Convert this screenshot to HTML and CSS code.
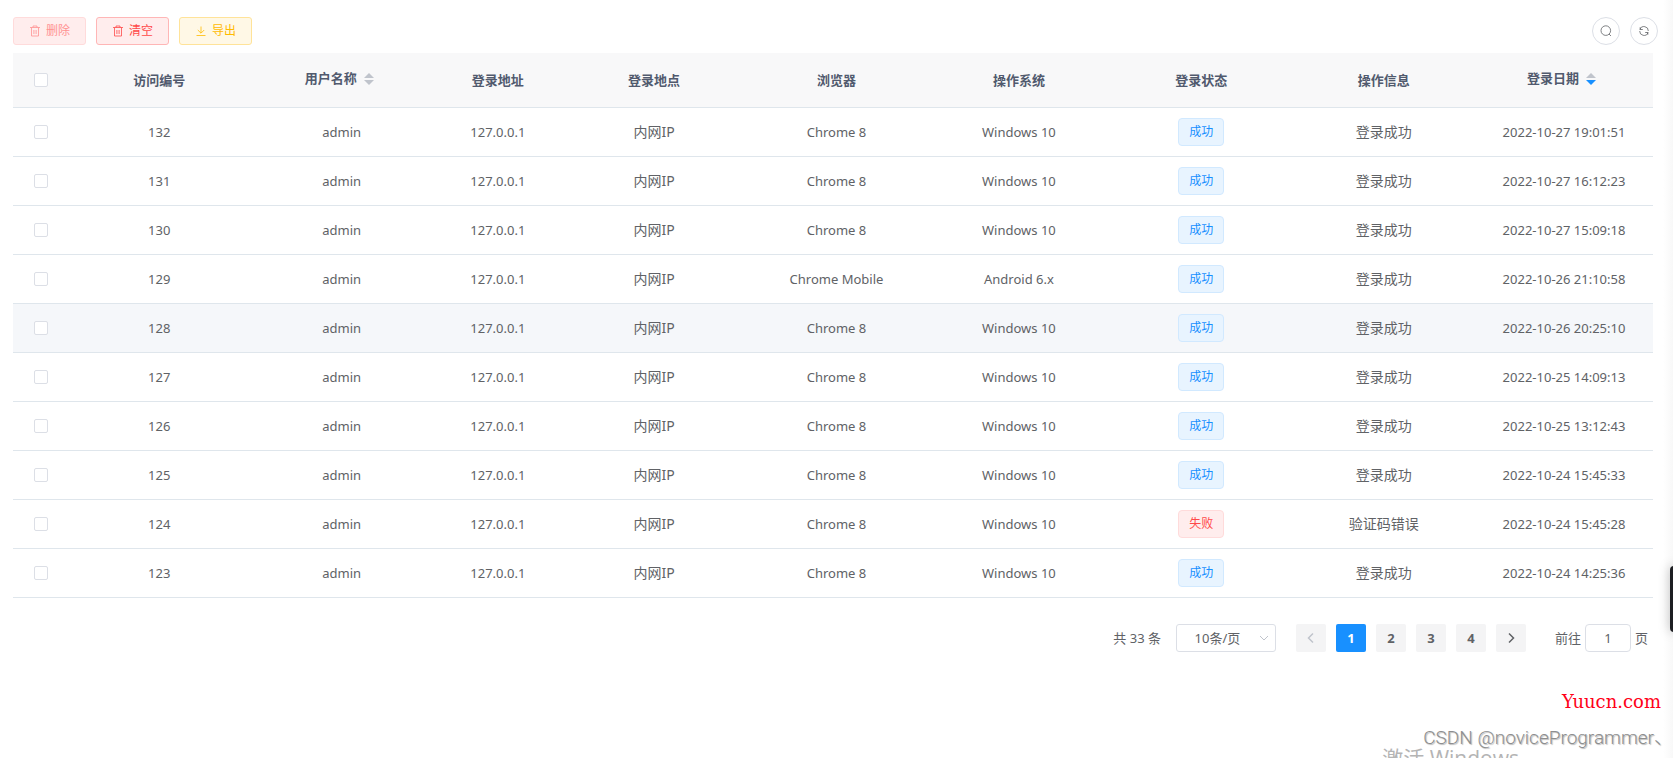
FILE: index.html
```
<!DOCTYPE html>
<html lang="zh-CN">
<head>
<meta charset="utf-8">
<title>登录日志</title>
<link rel="stylesheet" href="styles.css">
</head>
<body>
<svg class="sprite" aria-hidden="true">
  <symbol id="i-trash" viewBox="0 0 12 12"><path d="M1 2.500h10M4 2.500v-1.500h4v1.500M2.500 2.500v8.500h7v-8.500M4.900 5v4M7.100 5v4" fill="none" stroke="currentColor" stroke-width=".8"/></symbol>
  <symbol id="i-down" viewBox="0 0 12 12"><path d="M6 1.500v6.500M2.800 5L6 8.200 9.200 5M1.500 10.500h9" fill="none" stroke="currentColor" stroke-width=".8"/></symbol>
  <symbol id="i-search" viewBox="0 0 12 12"><circle cx="5.800" cy="5.600" r="4.800" fill="none" stroke="currentColor" stroke-width=".8"/><path d="M9 9l2 2" stroke="currentColor" stroke-width=".8"/></symbol>
  <symbol id="i-refresh" viewBox="0 0 12 12"><path d="M2.200 5V2.200M2.200 4.500h2.600M2 4.300A4.300 4.300 0 0 1 10.300 6M9.800 7v2.800M9.800 7.500H7.200M10 7.700A4.300 4.300 0 0 1 1.700 6" fill="none" stroke="currentColor" stroke-width=".8"/></symbol>
  <symbol id="i-left" viewBox="0 0 12 12"><path d="M8 1.500L3.500 6 8 10.500" fill="none" stroke="currentColor" stroke-width="1.500"/></symbol>
  <symbol id="i-right" viewBox="0 0 12 12"><path d="M4 1.500L8.500 6 4 10.500" fill="none" stroke="currentColor" stroke-width="1.500"/></symbol>
  <symbol id="i-chevron" viewBox="0 0 12 12"><path d="M2 4l4 4 4-4" fill="none" stroke="currentColor"/></symbol>
</svg>
<main class="page">
  <div class="toolbar">
    <button class="btn btn-danger" type="button" disabled><svg class="icon"><use href="#i-trash"/></svg>删除</button>
    <button class="btn btn-danger" type="button"><svg class="icon"><use href="#i-trash"/></svg>清空</button>
    <button class="btn btn-warning" type="button"><svg class="icon"><use href="#i-down"/></svg>导出</button>
    <div class="tools">
      <button class="round" type="button" aria-label="搜索"><svg class="icon"><use href="#i-search"/></svg></button>
      <button class="round" type="button" aria-label="刷新"><svg class="icon"><use href="#i-refresh"/></svg></button>
    </div>
  </div>
  <div class="content">
    <table class="log">
      <colgroup><col class="col-check"><col><col><col class="col-addr"><col><col><col><col><col><col class="col-date"></colgroup>
      <thead>
        <tr>
          <th><input class="check" type="checkbox" aria-label="全选"></th>
          <th>访问编号</th>
          <th><span class="sort">用户名称<span class="carets"><i class="up"></i><i class="down"></i></span></span></th>
          <th>登录地址</th>
          <th>登录地点</th>
          <th>浏览器</th>
          <th>操作系统</th>
          <th>登录状态</th>
          <th>操作信息</th>
          <th><span class="sort">登录日期<span class="carets"><i class="up"></i><i class="down active"></i></span></span></th>
        </tr>
      </thead>
      <tbody id="rows"></tbody>
    </table>
    <nav class="pager" aria-label="分页">
      <span class="total">共 33 条</span>
      <span class="size">
        <select class="size-select" aria-label="每页条数"><option>10条/页</option></select>
        <svg class="icon size-arrow"><use href="#i-chevron"/></svg>
      </span>
      <div class="pages">
        <button class="num" type="button" aria-label="上一页" disabled><svg class="icon"><use href="#i-left"/></svg></button>
        <button class="num current" type="button">1</button>
        <button class="num" type="button">2</button>
        <button class="num" type="button">3</button>
        <button class="num" type="button">4</button>
        <button class="num" type="button" aria-label="下一页"><svg class="icon"><use href="#i-right"/></svg></button>
      </div>
      <label class="jump">前往<input class="jump-input" type="text" value="1">页</label>
    </nav>
  </div>
  <div class="edge"></div>
  <div class="handle"></div>
  <div class="mark-site">Yuucn.com</div>
  <div class="mark-author">CSDN @noviceProgrammer、</div>
  <div class="mark-system">激活 Windows</div>
</main>
<script src="rows.js"></script>
</body>
</html>
```
FILE: rows.js
```
const records = [
  [132, 'Chrome 8', 'Windows 10', true, '登录成功', '2022-10-27 19:01:51'],
  [131, 'Chrome 8', 'Windows 10', true, '登录成功', '2022-10-27 16:12:23'],
  [130, 'Chrome 8', 'Windows 10', true, '登录成功', '2022-10-27 15:09:18'],
  [129, 'Chrome Mobile', 'Android 6.x', true, '登录成功', '2022-10-26 21:10:58'],
  [128, 'Chrome 8', 'Windows 10', true, '登录成功', '2022-10-26 20:25:10'],
  [127, 'Chrome 8', 'Windows 10', true, '登录成功', '2022-10-25 14:09:13'],
  [126, 'Chrome 8', 'Windows 10', true, '登录成功', '2022-10-25 13:12:43'],
  [125, 'Chrome 8', 'Windows 10', true, '登录成功', '2022-10-24 15:45:33'],
  [124, 'Chrome 8', 'Windows 10', false, '验证码错误', '2022-10-24 15:45:28'],
  [123, 'Chrome 8', 'Windows 10', true, '登录成功', '2022-10-24 14:25:36']
];
document.getElementById('rows').innerHTML = records.map(([id, browser, os, ok, info, date]) => `
  <tr${id === 128 ? ' class="hovered"' : ''}>
    <td><input class="check" type="checkbox" aria-label="选择 ${id}"></td>
    <td>${id}</td><td>admin</td><td>127.0.0.1</td><td class="han">内网IP</td>
    <td>${browser}</td><td>${os}</td>
    <td><span class="tag ${ok ? 'tag-ok' : 'tag-fail'}">${ok ? '成功' : '失败'}</span></td>
    <td class="han">${info}</td><td>${date}</td>
  </tr>`).join('');
```
FILE: styles.css
```
* { box-sizing: border-box; }
body {
  margin: 0;
  background: #fff;
  color: #606266;
  font-family: "Noto Sans", "Noto Sans CJK SC", sans-serif;
  font-size: 13px;
}
button, input, select { font-family: inherit; font-size: inherit; color: inherit; margin: 0; }
.sprite { position: absolute; width: 0; height: 0; }
.icon { width: 12px; height: 12px; flex: none; }
.page {
  position: relative;
  min-height: 100vh;
  overflow: hidden;
  padding: 17px 15px 0 13px;
}
.toolbar { display: flex; gap: 10px; margin-bottom: 8px; }
.btn {
  display: flex;
  align-items: center;
  gap: 5px;
  height: 28px;
  padding: 0 15px;
  border: 1px solid;
  border-radius: 3px;
  font-size: 12px;
  line-height: 12px;
}
.btn-danger { color: #ff4949; background: #ffeded; border-color: #ffb6b6; }
.btn-danger:disabled { color: #ff9292; border-color: #ffdbdb; }
.btn-warning { color: #ffba00; background: #fff8e6; border-color: #ffe399; }
.tools { display: flex; gap: 10px; margin-left: auto; }
.round {
  display: flex;
  align-items: center;
  justify-content: center;
  width: 28px;
  height: 28px;
  padding: 0;
  border: 1px solid #dcdfe6;
  border-radius: 50%;
  background: #fff;
}
.content { margin-right: 5px; }
.log { width: 100%; table-layout: fixed; border-collapse: separate; border-spacing: 0; }
.col-check { width: 55px; }
.col-addr { width: 130px; }
.col-date { width: 178px; }
.log th, .log td {
  height: 49px;
  padding: 0;
  border-bottom: 1px solid #dfe6ec;
  text-align: center;
  vertical-align: middle;
  line-height: 20px;
}
.log th { height: 55px; background: #f8f8f9; color: #515a6e; font-weight: 700; }
.log .han { font-size: 14px; }
.hovered td { background: #f5f7fa; }
.check {
  appearance: none;
  display: block;
  width: 14px;
  height: 14px;
  margin: 0 auto;
  border: 1px solid #dcdfe6;
  border-radius: 2px;
  background: #fff;
}
.check:checked { background: #1890ff; }
.sort { display: flex; align-items: center; justify-content: center; gap: 7px; padding: 0 5px 5px 0; }
.carets { display: flex; flex-direction: column; gap: 2px; padding-top: 2px; }
.carets i { border: 5px solid transparent; }
.carets .up { border-top: 0; border-bottom-color: #c0c4cc; }
.carets .down { border-bottom: 0; border-top-color: #c0c4cc; }
.carets .active { border-top-color: #1890ff; }
.tag {
  display: inline-block;
  height: 28px;
  padding: 0 10px;
  border: 1px solid;
  border-radius: 4px;
  font-size: 12px;
  line-height: 26px;
  vertical-align: middle;
}
.tag-ok { color: #1890ff; background: #e8f4ff; border-color: #d1e9ff; }
.tag-fail { color: #ff4949; background: #ffeded; border-color: #ffdbdb; }
.pager { display: flex; justify-content: flex-end; align-items: center; margin-top: 26px; padding-right: 5px; line-height: 28px; }
.total { margin-right: 15px; }
.size { position: relative; display: flex; margin-right: 20px; }
.size-select {
  appearance: none;
  width: 100px;
  height: 28px;
  padding: 0 25px 0 8px;
  border: 1px solid #dcdfe6;
  border-radius: 3px;
  background: #fff;
  text-align: center;
  text-align-last: center;
}
.size-arrow { position: absolute; right: 6px; top: 8px; color: #c0c4cc; }
.pages { display: flex; gap: 10px; margin-right: 29px; }
.num {
  display: flex;
  align-items: center;
  justify-content: center;
  width: 30px;
  height: 28px;
  padding: 0;
  border: 0;
  border-radius: 2px;
  background: #f4f4f5;
  font-weight: 700;
}
.num:disabled { color: #c0c4cc; }
.current { background: #1890ff; color: #fff; }
.jump { display: flex; align-items: center; gap: 4px; }
.jump-input {
  width: 46px;
  height: 28px;
  padding: 0;
  border: 1px solid #dcdfe6;
  border-radius: 4px;
  background: #fff;
  text-align: center;
}
.edge { position: absolute; top: 0; right: 0; bottom: 0; width: 10px; background: linear-gradient(to right, #fff, #f8f8f8); }
.handle {
  position: absolute;
  top: 566px;
  right: -5px;
  width: 8px;
  height: 66px;
  border-radius: 4px;
  background: #1d1e22;
  box-shadow: 0 0 12px #0004;
}
.mark-site, .mark-author, .mark-system { position: absolute; white-space: nowrap; }
.mark-site { right: 12px; top: 691px; color: #ff0018; font: 400 18px/22px "DejaVu Serif", serif; }
.mark-author { right: 0; top: 726px; color: #8e8e8e; font: 300 19px/24px Roboto, "Noto Sans CJK SC", sans-serif; text-shadow: 1px 1px 1px #bbb; }
.mark-system { right: 154px; top: 744px; color: #b4b4b4; font: 400 21px/28px "Open Sans", "Noto Sans CJK SC", sans-serif; }
```
